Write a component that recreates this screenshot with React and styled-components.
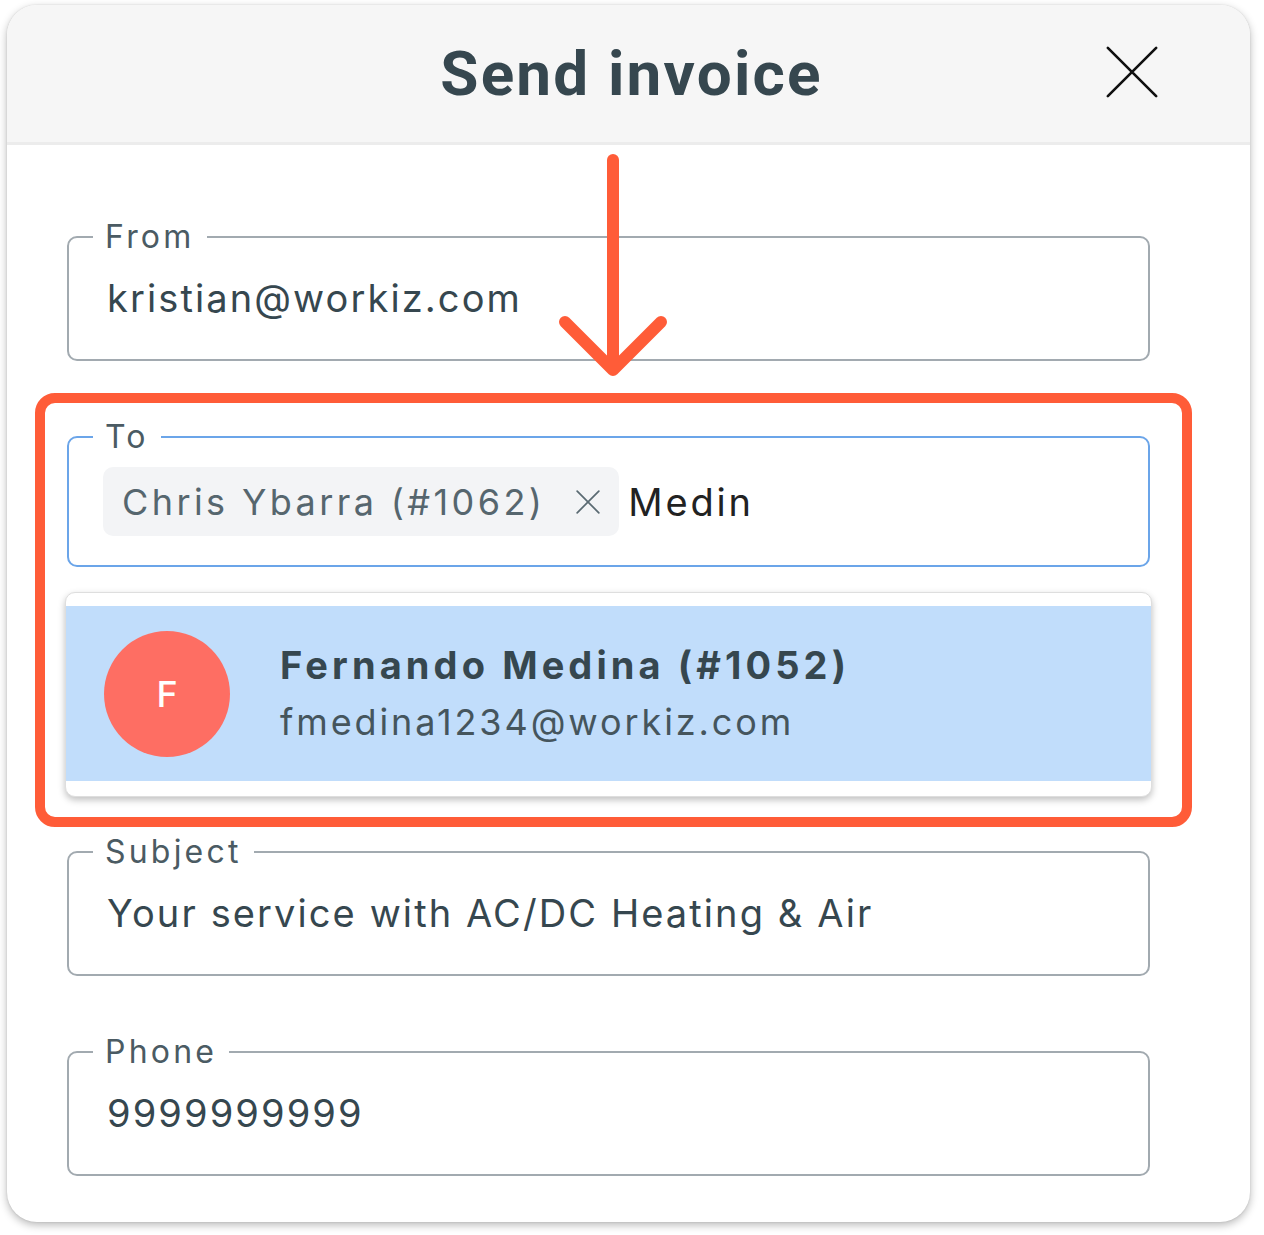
import React from 'react'
import styled, { createGlobalStyle } from 'styled-components'

const GlobalStyle = createGlobalStyle`
  html, body {
    margin: 0;
    padding: 0;
    background: #ffffff;
  }
  body {
    font-family: Inter, "Noto Sans", "Liberation Sans", sans-serif;
  }
`;

const Page = styled.div`
  padding: 5px 0 0 7px;
  width: 1264px;
  height: 1235px;
  box-sizing: border-box;
`;

const Card = styled.div`
  position: relative;
  width: 1243px;
  height: 1217px;
  border-radius: 30px;
  background: #ffffff;
  box-shadow: 0 3px 8px rgba(0, 0, 0, 0.28), 0 0 2px rgba(0, 0, 0, 0.12);
  overflow: hidden;
`;

const Header = styled.header`
  height: 137px;
  background: #f6f6f6;
  border-bottom: 3px solid #ececec;
  display: flex;
  align-items: center;
  justify-content: center;
  position: relative;
`;

const Title = styled.h1`
  margin: 0;
  font-family: Roboto, "Liberation Sans", sans-serif;
  font-weight: 700;
  font-size: 62px;
  color: #36474f;
  letter-spacing: 2.2px;
  transform: translateX(3px);
`;

const CloseButton = styled.button`
  position: absolute;
  right: 86px;
  top: 35px;
  width: 64px;
  height: 64px;
  padding: 0;
  border: none;
  background: none;
  display: flex;
  align-items: center;
  justify-content: center;
`;

const Body = styled.div`
  padding: 74px 100px 0 60px;
  display: flex;
  flex-direction: column;
`;

const Field = styled.fieldset`
  margin: 0;
  padding: 0 38px;
  border: 2.5px solid ${p => (p.$active ? '#6ba5e9' : '#a2aab0')};
  border-radius: 10px;
  margin-top: ${p => p.$gap || 0}px;
`;

const Legend = styled.legend`
  margin-left: -14px;
  padding: 0 12px;
  font-size: 32px;
  line-height: 36px;
  color: #4b5b63;
  letter-spacing: 3.2px;
`;

const Value = styled.div`
  height: 104px;
  box-sizing: border-box;
  padding-bottom: 18px;
  display: flex;
  align-items: center;
  font-size: 38px;
  color: #36474f;
  letter-spacing: 2.1px;
`;

const Highlight = styled.div`
  margin: 32px -42px 0 -32px;
  padding: 16px 32px 20px 22px;
  border: 10px solid #ff5c38;
  border-radius: 20px;
`;

const TagRow = styled.div`
  display: flex;
  align-items: center;
  padding: 12px 0 29px;
  margin-left: -4px;
`;

const Chip = styled.span`
  display: inline-flex;
  align-items: center;
  height: 69px;
  padding: 0 18px 0 19px;
  gap: 30px;
  background: #f3f4f6;
  border-radius: 10px;
  font-size: 36px;
  color: #56666e;
  letter-spacing: 3.4px;
`;

const Typed = styled.span`
  margin-left: 9px;
  font-size: 38px;
  color: #222222;
  letter-spacing: 2.8px;
`;

const Dropdown = styled.div`
  margin: 25px -2px 0;
  padding: 13px 0 15px;
  background: #ffffff;
  border: 1px solid #dedede;
  border-radius: 10px;
  box-shadow: 0 3px 7px rgba(0, 0, 0, 0.25);
`;

const Option = styled.div`
  height: 175px;
  background: #c1ddfb;
  display: flex;
  align-items: center;
  padding-left: 38px;
  gap: 50px;
`;

const Avatar = styled.div`
  width: 126px;
  height: 126px;
  border-radius: 50%;
  background: #fe6e63;
  color: #ffffff;
  font-size: 36px;
  font-weight: 500;
  display: flex;
  align-items: center;
  justify-content: center;
  flex-shrink: 0;
`;

const OptionText = styled.div`
  display: flex;
  flex-direction: column;
  gap: 12px;
  padding-bottom: 2px;
`;

const OptionName = styled.div`
  font-size: 38px;
  font-weight: 700;
  color: #36474f;
  letter-spacing: 4.1px;
`;

const OptionEmail = styled.div`
  font-size: 36px;
  color: #45555d;
  letter-spacing: 2.9px;
`;

const Arrow = styled.svg`
  position: absolute;
  left: 0;
  top: 0;
  pointer-events: none;
`;

const XIcon = ({ size, stroke, color }) => (
  <svg width={size} height={size} viewBox="0 0 24 24">
    <path d="M2 2 L22 22 M22 2 L2 22" stroke={color} strokeWidth={stroke} strokeLinecap="round" fill="none" />
  </svg>
)

const TextField = ({ label, value, gap }) => (
  <Field $gap={gap}>
    <Legend>{label}</Legend>
    <Value>{value}</Value>
  </Field>
)

export default function App() {
  return (
    <>
      <GlobalStyle />
      <Page>
        <Card>
          <Header>
            <Title>Send invoice</Title>
            <CloseButton aria-label="Close">
              <XIcon size={58} stroke={1.1} color="#111111" />
            </CloseButton>
          </Header>

          <Body>
            <TextField label="From" value="kristian@workiz.com" />

            <Highlight>
              <Field $active>
                <Legend>To</Legend>
                <TagRow>
                  <Chip>
                    Chris Ybarra (#1062)
                    <XIcon size={26} stroke={1.6} color="#5a6a72" />
                  </Chip>
                  <Typed>Medin</Typed>
                </TagRow>
              </Field>

              <Dropdown>
                <Option>
                  <Avatar>F</Avatar>
                  <OptionText>
                    <OptionName>Fernando Medina (#1052)</OptionName>
                    <OptionEmail>fmedina1234@workiz.com</OptionEmail>
                  </OptionText>
                </Option>
              </Dropdown>
            </Highlight>

            <TextField gap={7} label="Subject" value="Your service with AC/DC Heating & Air" />
            <TextField gap={58} label="Phone" value="9999999999" />
          </Body>

          <Arrow width="1243" height="400" viewBox="0 0 1243 400">
            <g transform="translate(-7 -5)" stroke="#ff5c38" strokeWidth="12" strokeLinecap="round" strokeLinejoin="round" fill="none">
              <path d="M613 160 L613 366" />
              <path d="M565 322 L613 370 L661 322" />
            </g>
          </Arrow>
        </Card>
      </Page>
    </>
  )
}
